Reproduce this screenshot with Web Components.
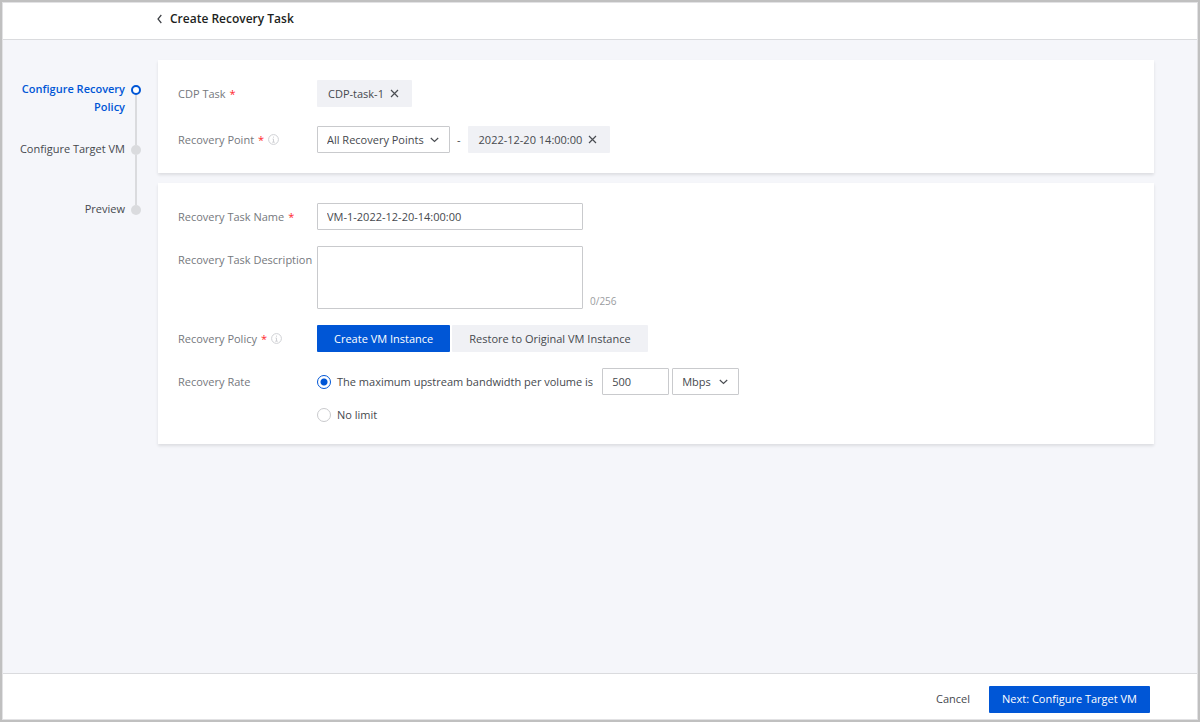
<!DOCTYPE html>
<html lang="en">
<head>
<meta charset="utf-8">
<title>Create Recovery Task</title>
<style>
    html, body {
        height: 100%;
        margin: 0;
    }
    body {
        font: 11px/18px "Open Sans", "Noto Sans", sans-serif;
        color: #46494e;
        --blue: #0056d6;
        --line: #c9cacd;
        --soft: #f0f1f5;
    }
</style>
</head>
<body>

<template id="app-shell">
    <style>
        :host {
            display: flex;
            flex-direction: column;
            box-sizing: border-box;
            min-height: 100vh;
            border: 2px solid #c0c0c0;
            outline: 1px solid #e2e2e4;
            outline-offset: -3px;
            background: #f5f6fa;
        }
        header {
            display: flex;
            align-items: center;
            gap: 8px;
            height: 34px;
            padding: 0 0 3px 155px;
            background: #fff;
            border-bottom: 1px solid #dadbde;
        }
        header button {
            display: flex;
            padding: 0;
            border: 0;
            background: none;
            cursor: pointer;
        }
        h1 {
            margin: 0;
            font-size: 12px;
            font-weight: 600;
            color: #1d1f22;
        }
        .body {
            display: flex;
            flex: 1;
            gap: 17px;
            padding: 20px 44px 20px 8px;
        }
        .content {
            display: flex;
            flex: 1;
            flex-direction: column;
            gap: 10px;
        }
        footer {
            display: flex;
            align-items: center;
            justify-content: flex-end;
            gap: 6px;
            box-sizing: border-box;
            height: 47px;
            padding: 4px 48px 0 0;
            background: #fff;
            border-top: 1px solid #dadbde;
        }
    </style>
    <header>
        <button type="button" aria-label="Back">
            <svg width="5" height="10" viewBox="0 0 5 10" fill="none" stroke="#3c3f44" stroke-width="1.2"><path d="M4.3 1 1 5l3.3 4"/></svg>
        </button>
        <h1><slot name="title"></slot></h1>
    </header>
    <div class="body">
        <slot name="steps"></slot>
        <div class="content"><slot></slot></div>
    </div>
    <footer><slot name="actions"></slot></footer>
</template>

<template id="step-item">
    <style>
        :host {
            display: flex;
            justify-content: flex-end;
            gap: 6px;
            height: 60px;
            text-align: right;
        }
        :host(:last-child) {
            height: 20px;
        }
        .mark {
            display: flex;
            flex-direction: column;
            align-items: center;
            width: 10px;
            padding-top: 5px;
            margin-bottom: -5px;
        }
        i {
            box-sizing: border-box;
            flex: none;
            width: 10px;
            height: 10px;
            border-radius: 50%;
            background: #dadbde;
        }
        .mark::after {
            content: "";
            flex: 1;
            width: 2px;
            background: #dadbde;
        }
        :host(:last-child) .mark::after {
            display: none;
        }
        :host([active]) {
            color: var(--blue);
            font-weight: 600;
        }
        :host([active]) i {
            border: 2px solid var(--blue);
            background: #fff;
        }
    </style>
    <span><slot></slot></span>
    <div class="mark"><i></i></div>
</template>

<template id="step-list">
    <style>
        :host {
            display: block;
            flex: none;
            width: 131px;
            padding-top: 20px;
        }
    </style>
    <slot></slot>
</template>

<template id="ui-button">
    <style>
        :host {
            display: inline-flex;
        }
        button {
            height: 27px;
            padding: 0 var(--pad, 17px);
            border: 0;
            border-radius: 1px;
            font: inherit;
            color: inherit;
            background: var(--soft);
            white-space: nowrap;
            cursor: pointer;
        }
        :host([primary]) button {
            color: #fff;
            background: var(--blue);
        }
        :host([plain]) button {
            background: none;
        }
    </style>
    <button type="button"><slot></slot></button>
</template>

<template id="ui-tag">
    <style>
        :host {
            display: inline-flex;
            align-items: center;
            gap: 6px;
            height: 27px;
            padding: 0 13px 0 11px;
            border-radius: 1px;
            background: var(--soft);
            white-space: nowrap;
        }
        button {
            display: flex;
            padding: 0;
            border: 0;
            background: none;
            cursor: pointer;
        }
    </style>
    <slot></slot>
    <button type="button" aria-label="Remove">
        <svg width="9" height="9" viewBox="0 0 9 9" fill="none" stroke="#4a4d52" stroke-width="1.2"><path d="m1 1 7 7M8 1 1 8"/></svg>
    </button>
</template>

<template id="select-box">
    <style>
        :host {
            display: inline-grid;
            align-items: center;
            width: 133px;
        }
        ::slotted(select), svg {
            grid-area: 1 / 1;
        }
        svg {
            justify-self: end;
            margin-right: 11px;
            pointer-events: none;
        }
    </style>
    <slot></slot>
    <svg width="9" height="6" viewBox="0 0 9 6" fill="none" stroke="#4a4d52" stroke-width="1.2"><path d="M.8 1 4.5 4.4 8.2 1"/></svg>
</template>

<template id="info-icon">
    <style>
        :host {
            display: inline-flex;
        }
    </style>
    <svg width="11" height="11" viewBox="0 0 11 11" fill="none" stroke="#cfd0d4"><circle cx="5.5" cy="5.5" r="4.9"/><path d="M5.5 2.6v1.1M4.5 5h1v3M4.2 8.2h2.6"/></svg>
</template>

<template id="form-card">
    <style>
        :host {
            display: flex;
            flex-direction: column;
            gap: var(--row-gap, 16px);
            padding: 20px;
            background: #fff;
            box-shadow: 0 2px 3px rgba(0, 0, 0, .1);
        }
    </style>
    <slot></slot>
</template>

<template id="form-row">
    <style>
        :host {
            display: flex;
        }
        .label {
            display: flex;
            align-items: center;
            gap: 4px;
            flex: none;
            width: 139px;
            height: 27px;
            color: #75787d;
            white-space: nowrap;
        }
        .required {
            display: none;
            color: #ff1f2d;
        }
        :host([required]) .required {
            display: inline;
        }
        .field {
            display: flex;
            align-items: center;
            flex-wrap: wrap;
            gap: var(--field-gap, 7px);
        }
        :host([end]) .field {
            align-items: flex-end;
        }
    </style>
    <div class="label"><slot name="label"></slot><span class="required">*</span><slot name="hint"></slot></div>
    <div class="field"><slot></slot></div>
</template>

<template id="recovery-form">
    <style>
        :host {
            display: flex;
            flex-direction: column;
            gap: 10px;
        }
        .source {
            --row-gap: 19px;
        }
        input, textarea, select {
            box-sizing: border-box;
            margin: 0;
            border: 1px solid var(--line);
            border-radius: 1px;
            padding: 0 9px;
            font: inherit;
            color: inherit;
            background: #fff;
        }
        input, select {
            height: 27px;
        }
        select {
            appearance: none;
        }
        .wide {
            width: 266px;
        }
        textarea {
            display: block;
            height: 63px;
            resize: none;
        }
        .count {
            font-size: 10px;
            line-height: 16px;
            color: #9a9ca0;
        }
        .policy {
            --field-gap: 2px;
        }
        .rates {
            display: flex;
            flex-direction: column;
            gap: 11px;
        }
        .rate {
            display: flex;
            align-items: center;
        }
        .rate label {
            margin: 0 9px 0 6px;
        }
        .number {
            width: 67px;
            margin-right: 3px;
        }
        .unit {
            width: 67px;
        }
        input[type=radio] {
            appearance: none;
            width: 14px;
            height: 14px;
            padding: 0;
            border-radius: 50%;
        }
        input[type=radio]:checked {
            border-color: var(--blue);
            background: radial-gradient(var(--blue) 3px, #fff 4px);
        }
    </style>
    <form-card class="source">
        <form-row required>
            <span slot="label">CDP Task</span>
            <ui-tag>CDP-task-1</ui-tag>
        </form-row>
        <form-row required>
            <label slot="label" for="point">Recovery Point</label>
            <info-icon slot="hint"></info-icon>
            <select-box><select id="point"><option>All Recovery Points</option></select></select-box>
            <span>-</span>
            <ui-tag>2022-12-20 14:00:00</ui-tag>
        </form-row>
    </form-card>
    <form-card>
        <form-row required>
            <label slot="label" for="name">Recovery Task Name</label>
            <input class="wide" id="name" type="text" value="VM-1-2022-12-20-14:00:00">
        </form-row>
        <form-row end>
            <label slot="label" for="description">Recovery Task Description</label>
            <textarea class="wide" id="description"></textarea>
            <span class="count">0/256</span>
        </form-row>
        <form-row class="policy" required>
            <span slot="label">Recovery Policy</span>
            <info-icon slot="hint"></info-icon>
            <ui-button primary>Create VM Instance</ui-button>
            <ui-button>Restore to Original VM Instance</ui-button>
        </form-row>
        <form-row>
            <span slot="label">Recovery Rate</span>
            <div class="rates">
                <div class="rate">
                    <input type="radio" name="rate" id="limited" checked>
                    <label for="limited">The maximum upstream bandwidth per volume is</label>
                    <input class="number" type="text" value="500" aria-label="Bandwidth">
                    <select-box class="unit"><select aria-label="Unit"><option>Mbps</option></select></select-box>
                </div>
                <div class="rate">
                    <input type="radio" name="rate" id="unlimited">
                    <label for="unlimited">No limit</label>
                </div>
            </div>
        </form-row>
    </form-card>
</template>

<app-shell>
    <span slot="title">Create Recovery Task</span>
    <step-list slot="steps">
        <step-item active>Configure Recovery Policy</step-item>
        <step-item>Configure Target VM</step-item>
        <step-item>Preview</step-item>
    </step-list>
    <recovery-form></recovery-form>
    <ui-button slot="actions" plain style="--pad: 13px">Cancel</ui-button>
    <ui-button slot="actions" primary style="--pad: 13px">Next: Configure Target VM</ui-button>
</app-shell>

<script>
    // every template is registered as the element of the same name
    document.querySelectorAll('template').forEach(template => {
        window.customElements.define(template.id, class extends HTMLElement {
            constructor () {
                super();
                const shadowRoot = this.attachShadow({mode: 'open'});
                shadowRoot.appendChild(template.content.cloneNode(true));
            }
        });
    });
</script>
</body>
</html>
